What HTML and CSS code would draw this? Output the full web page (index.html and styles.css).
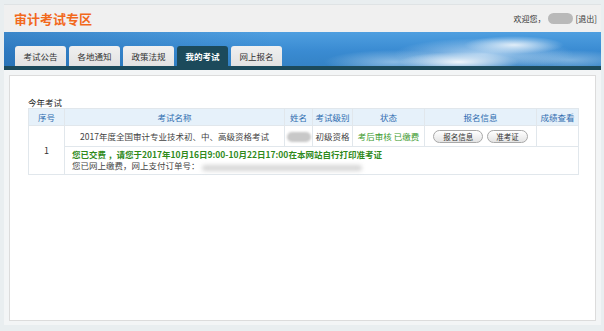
FILE: index.html
```html
<!DOCTYPE html>
<html lang="zh-CN">
<head>
<meta charset="utf-8">
<title>审计考试专区</title>
<link rel="stylesheet" href="styles.css">
</head>
<body>
<div class="page">
  <header class="header">
    <h1 class="title">审计考试专区</h1>
    <div class="user">欢迎您，<span class="user-name"></span><a class="logout">[退出]</a></div>
  </header>
  <nav class="banner">
    <a class="tab">考试公告</a>
    <a class="tab">各地通知</a>
    <a class="tab">政策法规</a>
    <a class="tab tab-active">我的考试</a>
    <a class="tab">网上报名</a>
  </nav>
  <div class="main">
    <div class="box">
      <div class="section-title">今年考试</div>
      <table class="exam">
        <colgroup>
          <col class="c1"><col class="c2"><col class="c3"><col class="c4"><col class="c5"><col class="c6"><col class="c7">
        </colgroup>
        <thead>
          <tr><th>序号</th><th>考试名称</th><th>姓名</th><th>考试级别</th><th>状态</th><th>报名信息</th><th>成绩查看</th></tr>
        </thead>
        <tbody>
          <tr class="row-main">
            <td rowspan="2" class="num">1</td>
            <td>2017年度全国审计专业技术初、中、高级资格考试</td>
            <td><span class="blur-name"></span></td>
            <td>初级资格</td>
            <td class="status">考后审核 已缴费</td>
            <td><span class="btn">报名信息</span><span class="btn">准考证</span></td>
            <td></td>
          </tr>
          <tr class="row-note">
            <td colspan="6" class="note">
              <div class="note-green">您已交费 ，请您于2017年10月16日9:00-10月22日17:00在本网站自行打印准考证</div>
              <div class="note-grey">您已网上缴费，网上支付订单号：<span class="blur-order"></span></div>
            </td>
          </tr>
        </tbody>
      </table>
    </div>
  </div>
</div>
</body>
</html>
```
FILE: styles.css
```css
html, body {
  margin: 0;
  padding: 0;
}
body {
  background: #e9eef0;
  font-family: "Noto Sans CJK SC", "Noto Sans", sans-serif;
  color: #444;
  height: 331px;
  overflow: hidden;
}
.page {
  margin: 4px 3px 0 4px;
  background: #f3f5f6;
  border-top: 1px solid #dfe3e5;
}
.header {
  height: 27px;
  background: #f0f0f0;
  display: flex;
  align-items: center;
  justify-content: space-between;
  padding: 0 4px 0 10px;
}
.title {
  margin: 0;
  font-size: 13px;
  font-weight: bold;
  color: #f2691c;
}
.user {
  display: flex;
  align-items: center;
  font-size: 8px;
  color: #333;
}
.user-name {
  display: inline-block;
  width: 25px;
  height: 11px;
  border-radius: 6px;
  background: #b9b9b9;
  margin: 0 3px 0 2px;
}
.logout {
  color: #333;
}
.banner {
  height: 34px;
  display: flex;
  align-items: flex-end;
  gap: 3px;
  padding-left: 11px;
  border-bottom: 4px solid #1c4a5b;
  background:
    radial-gradient(ellipse 60px 10px at 455px 30px, rgba(255,255,255,0.9), rgba(255,255,255,0)),
    radial-gradient(ellipse 50px 9px at 510px 13px, rgba(255,255,255,0.8), rgba(255,255,255,0)),
    radial-gradient(ellipse 90px 16px at 480px 22px, rgba(235,245,255,0.65), rgba(255,255,255,0)),
    radial-gradient(ellipse 70px 12px at 390px 30px, rgba(220,238,252,0.5), rgba(255,255,255,0)),
    radial-gradient(ellipse 60px 10px at 565px 28px, rgba(210,232,250,0.45), rgba(255,255,255,0)),
    linear-gradient(90deg, rgba(15,80,150,0.3) 0%, rgba(255,255,255,0) 45%, rgba(255,255,255,0) 100%),
    linear-gradient(180deg, #4f9fe0 0%, #3a8bd2 55%, #3483c6 100%);
}
.tab {
  width: 51px;
  height: 20px;
  display: flex;
  align-items: center;
  justify-content: center;
  font-size: 8.5px;
  color: #333;
  background: linear-gradient(180deg, #f0f0f0, #e2e2e2);
  border-radius: 3px 3px 0 0;
}
.tab-active {
  background: #1c4a5b;
  color: #fff;
  font-weight: bold;
}
.main {
  padding: 5px 5px 4px 5px;
}
.box {
  background: #fff;
  border: 1px solid #dcdcdc;
  height: 246px;
  padding: 20px 17px 0 18px;
  box-sizing: border-box;
}
.section-title {
  font-size: 8.5px;
  color: #222;
  line-height: 12px;
}
.exam {
  width: 550px;
  border-collapse: collapse;
  table-layout: fixed;
  font-size: 8.5px;
}
.c1 { width: 36px; }
.c2 { width: 220px; }
.c3 { width: 28px; }
.c4 { width: 40px; }
.c5 { width: 72px; }
.c6 { width: 112px; }
.c7 { width: 42px; }
.exam th, .exam td {
  border: 1px solid #e1e7ec;
  padding: 0;
  text-align: center;
  white-space: nowrap;
}
.exam th {
  height: 16px;
  background: #e6f1fa;
  color: #2f6db0;
  font-weight: normal;
}
.row-main td {
  height: 20px;
  color: #444;
}
.row-main td.num {
  font-size: 9px;
  color: #333;
}
.blur-name {
  display: inline-block;
  width: 24px;
  height: 10px;
  border-radius: 5px;
  background: #c8c8c8;
  filter: blur(1px);
  vertical-align: middle;
}
.row-main td.status {
  color: #3d9a2e;
}
.btn {
  display: inline-block;
  height: 11px;
  line-height: 11px;
  padding: 0 8px;
  margin: 0 2px;
  border: 1px solid #a8a8a8;
  border-radius: 7px;
  background: linear-gradient(180deg, #ffffff, #e4e4e4);
  color: #333;
  font-size: 7.5px;
  vertical-align: middle;
}
.btn:first-child {
  padding: 0 9px;
}
.row-note td.note {
  text-align: left;
  padding: 2px 7px 3px 7px;
  line-height: 11px;
}
.note-green {
  color: #2f8a1b;
  font-weight: bold;
}
.note-grey {
  color: #444;
  display: flex;
  align-items: center;
}
.blur-order {
  display: inline-block;
  width: 160px;
  height: 6px;
  margin-left: 2px;
  margin-top: 4px;
  background: #d6d6d6;
  border-radius: 3px;
  filter: blur(2px);
}
```
